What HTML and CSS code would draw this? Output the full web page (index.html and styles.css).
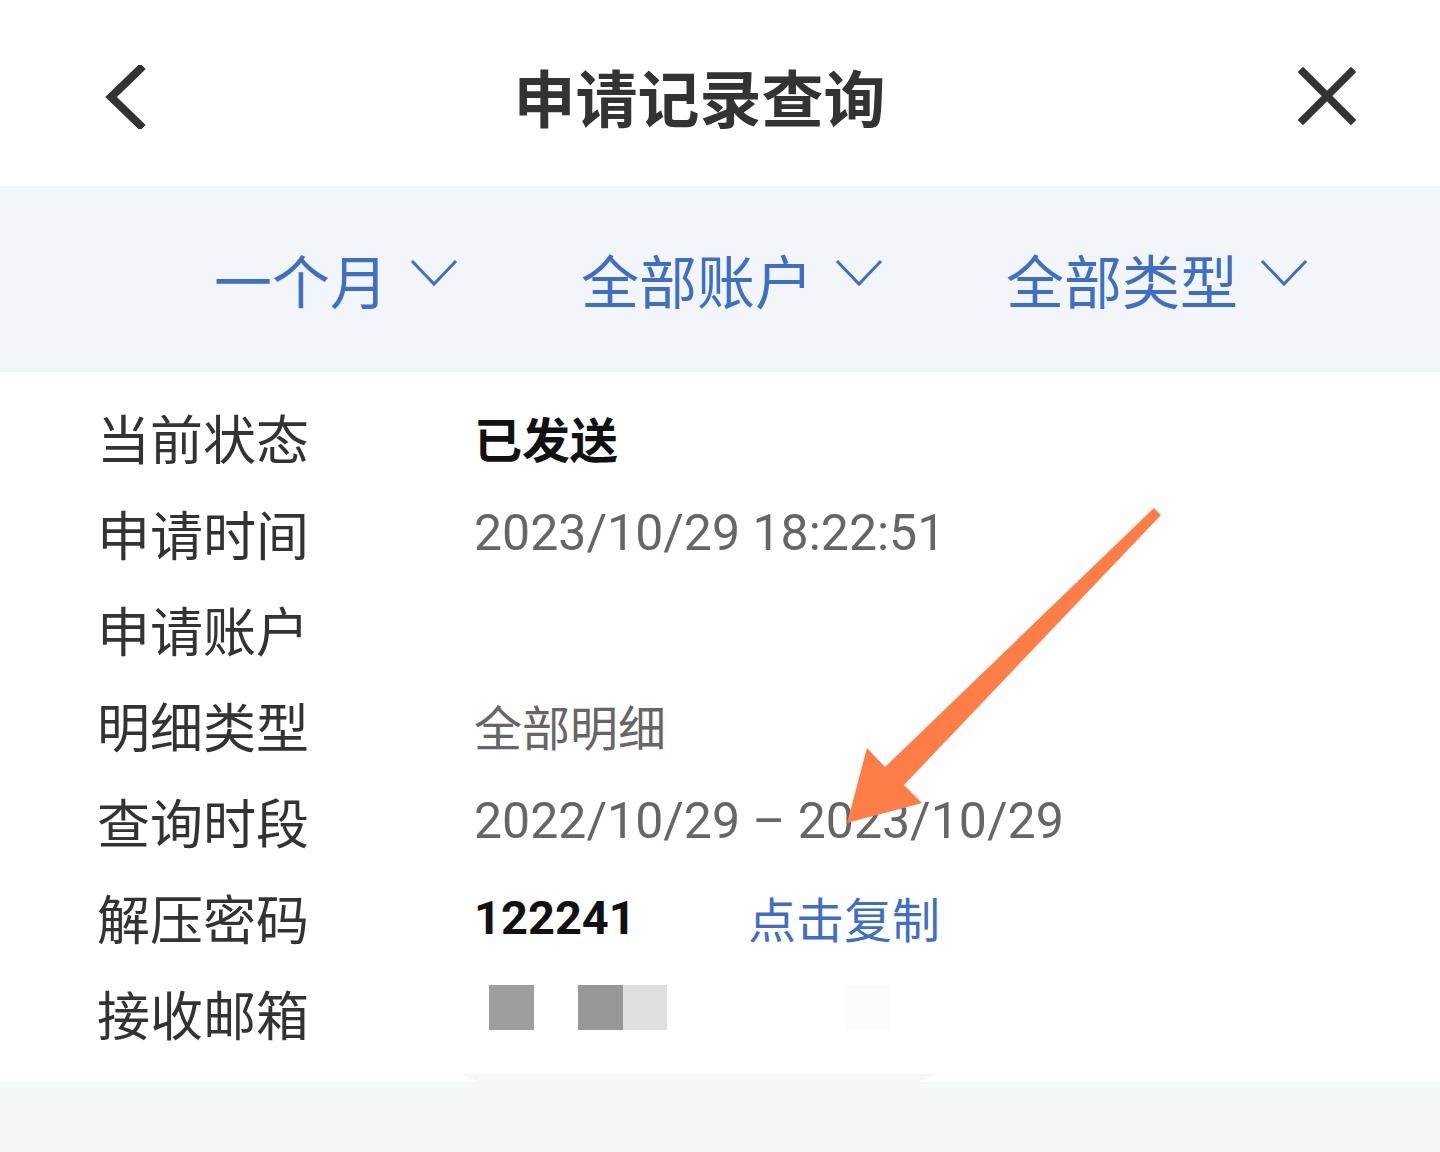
FILE: index.html
```html
<!DOCTYPE html>
<html lang="zh-CN">
<head>
<meta charset="utf-8">
<title>申请记录查询</title>
<link rel="stylesheet" href="styles.css">
</head>
<body>
<div class="page">
  <header class="topbar">
    <span class="icon-btn back">
      <svg width="48" height="64" viewBox="0 0 48 64"><path d="M37 4 L8 32 L37 60" fill="none" stroke="#333" stroke-width="8" stroke-linecap="square"/></svg>
    </span>
    <h1 class="title">申请记录查询</h1>
    <span class="icon-btn close">
      <svg width="64" height="64" viewBox="0 0 64 64"><path d="M7 7 L55 55 M55 7 L7 55" fill="none" stroke="#333" stroke-width="7.5" stroke-linecap="square"/></svg>
    </span>
  </header>

  <nav class="filters">
    <div class="filter"><span>一个月</span><svg class="chev" width="48" height="30" viewBox="0 0 48 30"><path d="M2 3 L24 26 L46 3" fill="none" stroke="#3f6fc5" stroke-width="3"/></svg></div>
    <div class="filter"><span>全部账户</span><svg class="chev" width="48" height="30" viewBox="0 0 48 30"><path d="M2 3 L24 26 L46 3" fill="none" stroke="#3f6fc5" stroke-width="3"/></svg></div>
    <div class="filter"><span>全部类型</span><svg class="chev" width="48" height="30" viewBox="0 0 48 30"><path d="M2 3 L24 26 L46 3" fill="none" stroke="#3f6fc5" stroke-width="3"/></svg></div>
  </nav>

  <section class="details">
    <div class="row"><span class="label">当前状态</span><span class="value strong">已发送</span></div>
    <div class="row"><span class="label">申请时间</span><span class="value num">2023/10/29 18:22:51</span></div>
    <div class="row"><span class="label">申请账户</span><span class="value"></span></div>
    <div class="row"><span class="label">明细类型</span><span class="value">全部明细</span></div>
    <div class="row"><span class="label">查询时段</span><span class="value num">2022/10/29 – 2023/10/29</span></div>
    <div class="row"><span class="label">解压密码</span><span class="value code">122241</span><span class="value link">点击复制</span></div>
    <div class="row"><span class="label">接收邮箱</span>
      <span class="value mask">
        <i class="sq dark"></i>
        <i class="sq dark2"></i><i class="sq light"></i>
        <i class="sq faint"></i>
      </span>
    </div>
  </section>

  <footer class="bottom"><div class="tab"></div></footer>

  <svg class="annot" width="1440" height="1152" viewBox="0 0 1440 1152">
    <polygon points="1154,508 1161,515 904,785 922,803 847,823 867,748 885,767" fill="#ff7d47"/>
  </svg>
</div>
</body>
</html>
```
FILE: styles.css
```css
* { box-sizing: border-box; }
html, body { margin: 0; padding: 0; background: #fff; }
body { font-family: "Noto Sans CJK SC", "Noto Sans", sans-serif; }

.page {
  position: relative;
  width: 1440px;
  height: 1152px;
  overflow: hidden;
  display: flex;
  flex-direction: column;
}

.topbar {
  height: 186px;
  display: flex;
  align-items: center;
  padding: 0 80px 0 103px;
  background: #fff;
}
.icon-btn { display: flex; align-items: center; }
.back { margin-top: 8px; }
.close { margin-top: 8px; }
.title {
  flex: 1;
  margin: 6px 0 0 0;
  padding-right: 48px;
  text-align: center;
  font-size: 62px;
  font-weight: 700;
  color: #333;
  line-height: 1;
}

.filters {
  height: 186px;
  background: #f2f6fa;
  display: flex;
  align-items: center;
  padding-left: 214px;
  gap: 123px;
}
.filter {
  display: flex;
  align-items: center;
  gap: 22px;
  color: #3f6fc5;
  font-size: 58px;
  line-height: 1;
}
.filter .chev { margin-top: -12px; }

.details {
  padding: 17px 0 21px 97px;
  background: #fff;
}
.row {
  height: 96px;
  display: flex;
  align-items: center;
}
.label {
  width: 377px;
  font-size: 53px;
  color: #333;
  line-height: 1;
}
.value {
  font-size: 48px;
  color: #666;
  line-height: 1;
}
.value.strong { color: #111; font-weight: 700; }
.value.num { font-family: Roboto, "Noto Sans CJK SC", sans-serif; font-size: 50px; }
.value.code {
  width: 274px;
  font-family: Roboto, sans-serif;
  font-weight: 700;
  font-size: 47px;
  color: #111;
}
.value.link { color: #3f6fc5; }

.mask { display: flex; align-items: center; padding-left: 15px; margin-top: -12px; }
.sq { display: block; width: 45px; height: 45px; }
.sq.dark { background: #9e9e9e; margin-right: 44px; }
.sq.dark2 { background: #989898; }
.sq.light { background: #e0e0e0; width: 44px; margin-right: 178px; }
.sq.faint { background: #fcfcfc; }

.bottom {
  position: relative;
  flex: 1;
  background: #f4f8f7;
}
.tab {
  position: absolute;
  left: 460px;
  top: -8px;
  width: 478px;
  height: 8px;
  background: #f4f8f7;
  clip-path: polygon(0 0, 100% 0, 96% 100%, 4% 100%);
}

.annot {
  position: absolute;
  left: 0;
  top: 0;
  pointer-events: none;
}
```
